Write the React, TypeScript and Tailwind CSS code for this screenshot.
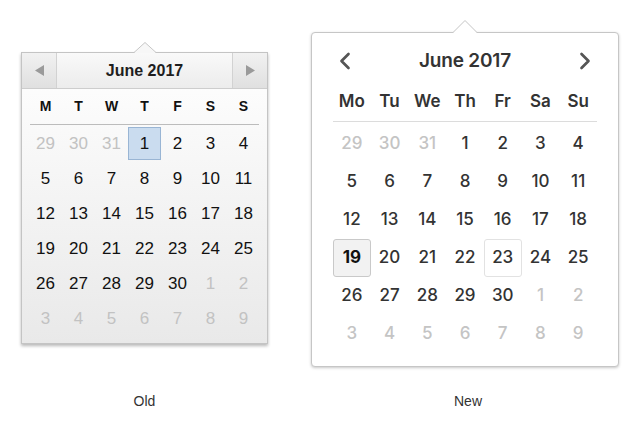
import { ChevronLeft, ChevronRight } from "lucide-react"

type Day = { n: number; muted: boolean }

const JUNE_2017: Day[] = [
  ...[29, 30, 31].map((n) => ({ n, muted: true })),
  ...Array.from({ length: 30 }, (_, i) => ({ n: i + 1, muted: false })),
  ...[1, 2, 3, 4, 5, 6, 7, 8, 9].map((n) => ({ n, muted: true })),
]

const OLD_HEADERS = ["M", "T", "W", "T", "F", "S", "S"]
const NEW_HEADERS = ["Mo", "Tu", "We", "Th", "Fr", "Sa", "Su"]

function OldCalendar() {
  return (
    <div className="flex flex-col w-[247px] font-['Liberation_Sans',Arial,sans-serif]">
      {/* Pointer */}
      <svg width="22" height="11" viewBox="0 0 22 11" className="block mx-auto -mb-[1px] relative z-10">
        <polygon points="0,11 11,0 22,11" fill="#f7f7f7" />
        <polyline points="0,10.5 11,0.5 22,10.5" fill="none" stroke="#c6c6c6" strokeWidth="1" />
      </svg>

      <div className="border border-[#c4c4c4] bg-gradient-to-b from-white to-[#e9e9e9] shadow-[0_2px_3px_rgba(0,0,0,0.28)]">
        {/* Header */}
        <div className="flex h-[36px] border-b border-[#cdcdcd] bg-gradient-to-b from-[#f9f9f9] to-[#ececec]">
          <button className="w-[35px] flex items-center justify-center border-r border-[#d2d2d2] bg-gradient-to-b from-[#f1f1f1] to-[#e0e0e0]">
            <svg width="9" height="11" viewBox="0 0 9 11">
              <polygon points="9,0 0,5.5 9,11" fill="#9a9a9a" />
            </svg>
          </button>
          <div className="flex-1 flex items-center justify-center text-[16px] font-bold text-[#1e1e1e]">
            June 2017
          </div>
          <button className="w-[35px] flex items-center justify-center border-l border-[#d2d2d2] bg-gradient-to-b from-[#f1f1f1] to-[#e0e0e0]">
            <svg width="9" height="11" viewBox="0 0 9 11">
              <polygon points="0,0 9,5.5 0,11" fill="#9a9a9a" />
            </svg>
          </button>
        </div>

        <div className="px-[7px] pb-[7px]">
          {/* Day headers */}
          <div className="grid grid-cols-7 h-[35px] items-center">
            {OLD_HEADERS.map((d, i) => (
              <div key={i} className="text-center text-[14px] font-bold text-[#111]">{d}</div>
            ))}
          </div>
          <div className="h-[1px] bg-[#bcbcbc] mx-[1px]" />

          {/* Days */}
          <div className="grid grid-cols-7 mt-[1px]">
            {JUNE_2017.map((d, i) => {
              const selected = !d.muted && d.n === 1
              return (
                <div key={i} className="h-[35px] flex items-center justify-center">
                  <div
                    className={`w-[33px] h-[33px] flex items-center justify-center text-[17px] ${
                      selected
                        ? "bg-[#cadcef] border border-[#99b5d4] text-[#111]"
                        : d.muted
                          ? "text-[#c2c2c2]"
                          : "text-[#111]"
                    }`}
                  >
                    {d.n}
                  </div>
                </div>
              )
            })}
          </div>
        </div>
      </div>
    </div>
  )
}

function NewCalendar() {
  return (
    <div className="flex flex-col w-[308px] font-['Inter','Noto_Sans',sans-serif]">
      {/* Pointer */}
      <svg width="24" height="13" viewBox="0 0 24 13" className="block mx-auto -mb-[1px] relative z-10">
        <polygon points="0,13 12,0.5 24,13" fill="#fff" />
        <polyline points="0,12.5 12,0.5 24,12.5" fill="none" stroke="#c4c4c4" strokeWidth="1" />
      </svg>

      <div className="bg-white border border-[#c6c6c6] rounded-[4px] shadow-[0_1px_3px_rgba(0,0,0,0.22)] px-[21px] pt-[8px] pb-[13px]">
        {/* Header */}
        <div className="flex items-center justify-between h-[40px]">
          <button className="w-[24px] h-[24px] flex items-center justify-center text-[#555]">
            <ChevronLeft className="w-[28px] h-[28px] shrink-0" strokeWidth={2.3} />
          </button>
          <span className="text-[19px] font-semibold text-[#333] tracking-[-0.2px]">June 2017</span>
          <button className="w-[24px] h-[24px] flex items-center justify-center text-[#555]">
            <ChevronRight className="w-[28px] h-[28px] shrink-0" strokeWidth={2.3} />
          </button>
        </div>

        {/* Day headers */}
        <div className="grid grid-cols-7 h-[38px] mt-[2px] items-center">
          {NEW_HEADERS.map((d) => (
            <div key={d} className="text-center text-[17px] font-semibold text-[#333]">{d}</div>
          ))}
        </div>
        <div className="h-[1px] bg-[#dcdcdc]" />

        {/* Days */}
        <div className="grid grid-cols-7 mt-[3px]">
          {JUNE_2017.map((d, i) => {
            const today = !d.muted && d.n === 19
            const selected = !d.muted && d.n === 23
            return (
              <div
                key={i}
                className={`h-[38px] flex items-center justify-center text-[17px] rounded-[3px] ${
                  today
                    ? "bg-[#f2f2f2] border border-[#c9c9c9] font-bold text-[#111]"
                    : selected
                      ? "border border-[#e2e2e2] font-medium text-[#333]"
                      : d.muted
                        ? "font-medium text-[#c4c4c4]"
                        : "font-medium text-[#333]"
                }`}
              >
                {d.n}
              </div>
            )
          })}
        </div>
      </div>
    </div>
  )
}

export default function App() {
  return (
    <div className="w-[640px] h-[426px] bg-white flex flex-col">
      <div className="flex items-start">
        <div className="ml-[21px] mt-[42px]">
          <OldCalendar />
        </div>
        <div className="ml-[43px] mt-[20px]">
          <NewCalendar />
        </div>
      </div>

      <div className="mt-auto mb-[18px] flex h-[17px] text-[14px] text-[#333] font-['Liberation_Sans',Arial,sans-serif]">
        <div className="ml-[21px] w-[247px] text-center">Old</div>
        <div className="ml-[43px] w-[308px] text-center pl-[6px]">New</div>
      </div>
    </div>
  )
}
